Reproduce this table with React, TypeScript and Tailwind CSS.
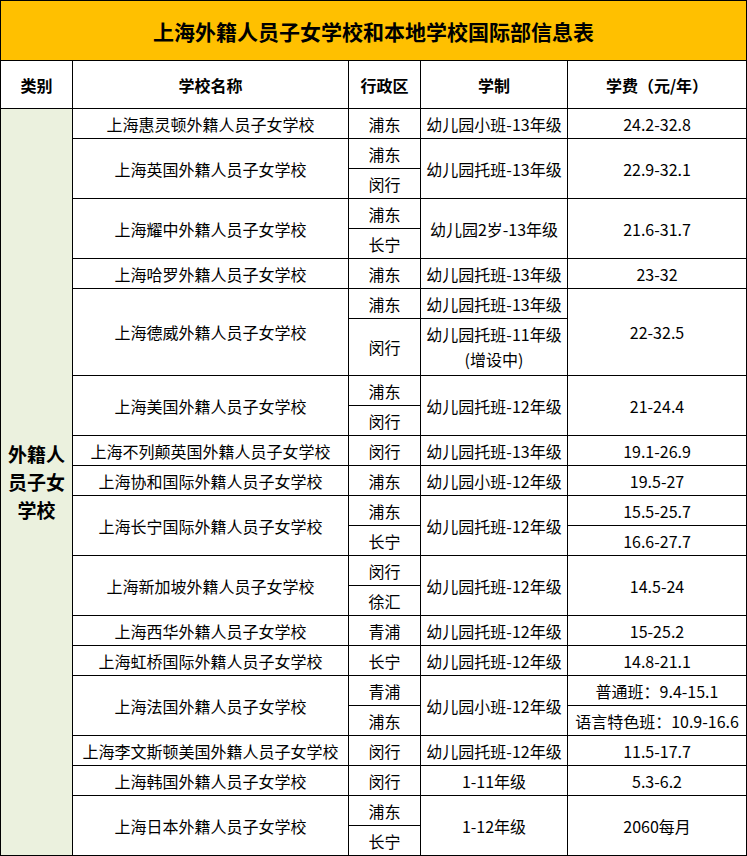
import React from "react";

const td = "border border-black text-center align-middle p-0 whitespace-nowrap";
const R = "h-[30px]";

function Name({ children, rs }: { children: React.ReactNode; rs?: number }) {
  return (
    <td rowSpan={rs} className={td}>
      {children}
    </td>
  );
}

function C({ children, rs, cls }: { children?: React.ReactNode; rs?: number; cls?: string }) {
  return (
    <td rowSpan={rs} className={`${td} ${cls ?? ""}`}>
      {children}
    </td>
  );
}

export default function App() {
  return (
    <div className="w-[747px] h-[856px] bg-white text-black" style={{ fontFamily: '"Noto Sans CJK SC", "Microsoft YaHei", sans-serif' }}>
      <table className="w-[747px] table-fixed border-collapse text-[16px] leading-[20px]">
        <colgroup>
          <col className="w-[72px]" />
          <col className="w-[276px]" />
          <col className="w-[72px]" />
          <col className="w-[147px]" />
          <col className="w-[179px]" />
        </colgroup>
        <tbody>
          <tr className="h-[60px]">
            <td colSpan={5} className="border border-black bg-[#ffc000] text-center align-middle text-[21px] font-bold leading-[28px]">
              上海外籍人员子女学校和本地学校国际部信息表
            </td>
          </tr>
          <tr className="h-[48px] font-bold">
            <C>类别</C>
            <C>学校名称</C>
            <C>行政区</C>
            <C>学制</C>
            <C>学费（元/年）</C>
          </tr>
          <tr className={R}>
            <td rowSpan={24} className="border border-black bg-[#ebf1de] text-center align-middle p-0 text-[19px] font-bold leading-[28px]">
              外籍人<br />员子女<br />学校
            </td>
            <Name>上海惠灵顿外籍人员子女学校</Name>
            <C>浦东</C>
            <C>幼儿园小班-13年级</C>
            <C>24.2-32.8</C>
          </tr>
          <tr className={R}>
            <Name rs={2}>上海英国外籍人员子女学校</Name>
            <C>浦东</C>
            <C rs={2}>幼儿园托班-13年级</C>
            <C rs={2}>22.9-32.1</C>
          </tr>
          <tr className={R}>
            <C>闵行</C>
          </tr>
          <tr className={R}>
            <Name rs={2}>上海耀中外籍人员子女学校</Name>
            <C>浦东</C>
            <C rs={2}>幼儿园2岁-13年级</C>
            <C rs={2}>21.6-31.7</C>
          </tr>
          <tr className={R}>
            <C>长宁</C>
          </tr>
          <tr className={R}>
            <Name>上海哈罗外籍人员子女学校</Name>
            <C>浦东</C>
            <C>幼儿园托班-13年级</C>
            <C>23-32</C>
          </tr>
          <tr className={R}>
            <Name rs={2}>上海德威外籍人员子女学校</Name>
            <C>浦东</C>
            <C>幼儿园托班-13年级</C>
            <C rs={2}>22-32.5</C>
          </tr>
          <tr className="h-[57px]">
            <C>闵行</C>
            <C cls="leading-[25px]">
              幼儿园托班-11年级
              <br />
              (增设中)
            </C>
          </tr>
          <tr className={R}>
            <Name rs={2}>上海美国外籍人员子女学校</Name>
            <C>浦东</C>
            <C rs={2}>幼儿园托班-12年级</C>
            <C rs={2}>21-24.4</C>
          </tr>
          <tr className={R}>
            <C>闵行</C>
          </tr>
          <tr className={R}>
            <Name>上海不列颠英国外籍人员子女学校</Name>
            <C>闵行</C>
            <C>幼儿园托班-13年级</C>
            <C>19.1-26.9</C>
          </tr>
          <tr className={R}>
            <Name>上海协和国际外籍人员子女学校</Name>
            <C>浦东</C>
            <C>幼儿园小班-12年级</C>
            <C>19.5-27</C>
          </tr>
          <tr className={R}>
            <Name rs={2}>上海长宁国际外籍人员子女学校</Name>
            <C>浦东</C>
            <C rs={2}>幼儿园托班-12年级</C>
            <C>15.5-25.7</C>
          </tr>
          <tr className={R}>
            <C>长宁</C>
            <C>16.6-27.7</C>
          </tr>
          <tr className={R}>
            <Name rs={2}>上海新加坡外籍人员子女学校</Name>
            <C>闵行</C>
            <C rs={2}>幼儿园托班-12年级</C>
            <C rs={2}>14.5-24</C>
          </tr>
          <tr className={R}>
            <C>徐汇</C>
          </tr>
          <tr className={R}>
            <Name>上海西华外籍人员子女学校</Name>
            <C>青浦</C>
            <C>幼儿园托班-12年级</C>
            <C>15-25.2</C>
          </tr>
          <tr className={R}>
            <Name>上海虹桥国际外籍人员子女学校</Name>
            <C>长宁</C>
            <C>幼儿园托班-12年级</C>
            <C>14.8-21.1</C>
          </tr>
          <tr className={R}>
            <Name rs={2}>上海法国外籍人员子女学校</Name>
            <C>青浦</C>
            <C rs={2}>幼儿园小班-12年级</C>
            <C>普通班：9.4-15.1</C>
          </tr>
          <tr className={R}>
            <C>浦东</C>
            <C>语言特色班：10.9-16.6</C>
          </tr>
          <tr className={R}>
            <Name>上海李文斯顿美国外籍人员子女学校</Name>
            <C>闵行</C>
            <C>幼儿园托班-12年级</C>
            <C>11.5-17.7</C>
          </tr>
          <tr className={R}>
            <Name>上海韩国外籍人员子女学校</Name>
            <C>闵行</C>
            <C>1-11年级</C>
            <C>5.3-6.2</C>
          </tr>
          <tr className={R}>
            <Name rs={2}>上海日本外籍人员子女学校</Name>
            <C>浦东</C>
            <C rs={2}>1-12年级</C>
            <C rs={2}>2060每月</C>
          </tr>
          <tr className={R}>
            <C>长宁</C>
          </tr>
        </tbody>
      </table>
    </div>
  );
}
